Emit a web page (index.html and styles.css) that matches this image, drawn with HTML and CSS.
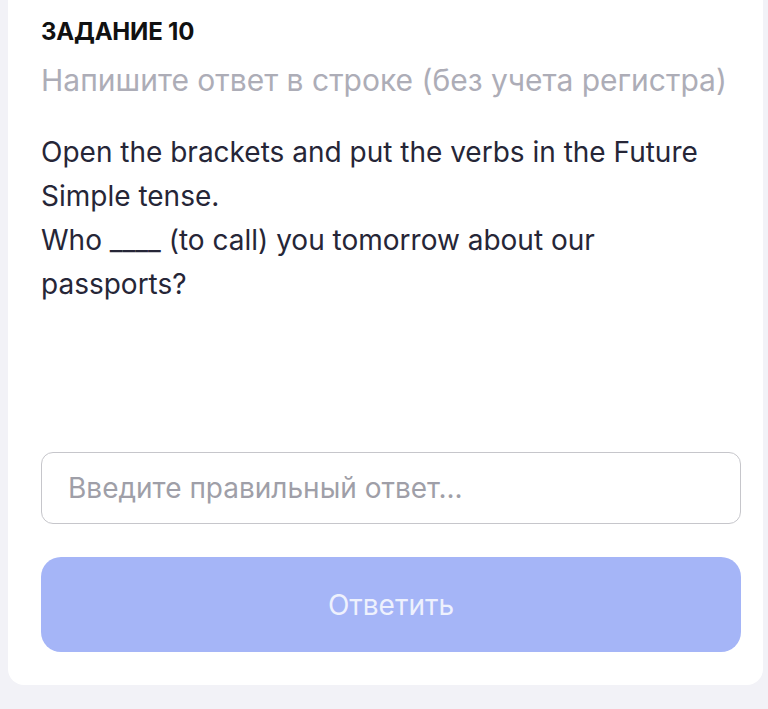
FILE: index.html
```html
<!DOCTYPE html>
<html lang="ru">
<head>
  <meta charset="UTF-8">
  <meta name="viewport" content="width=device-width, initial-scale=1.0">
  <title>Задание 10</title>
  <link rel="stylesheet" href="styles.css">
</head>
<body>
  <div class="task-card">
    <div class="task-header">
      <h2 class="task-title">ЗАДАНИЕ 10</h2>
      <div class="task-hint">Напишите ответ в строке (без учета регистра)</div>
    </div>

    <div class="task-text">
      <p>Open the brackets and put the verbs in the Future Simple tense.</p>
      <p>Who ____ (to call) you tomorrow about our passports?</p>
    </div>

    <form class="answer-form">
      <input type="text" class="answer-input" placeholder="Введите правильный ответ...">
      <button type="submit" class="answer-btn" disabled>Ответить</button>
    </form>
  </div>
</body>
</html>
```

FILE: styles.css
```css
body {
  margin: 0;
  background: #f2f2f7;
  font-family: Inter, "Noto Sans", sans-serif;
}

.task-card {
  margin: 0 5px 0 8px;
  padding: 17px 22px 33px 33px;
  background: #fff;
  border-radius: 0 0 16px 16px;
}

.task-title {
  margin: 0;
  font-size: 24px;
  font-weight: 700;
  letter-spacing: -0.2px;
  color: #111;
  line-height: 30px;
}

.task-hint {
  margin-top: 15px;
  font-size: 30px;
  line-height: 36px;
  color: #adadb7;
}

.task-text {
  margin-top: 32px;
  min-height: 322px;
  font-size: 28px;
  line-height: 44px;
  color: #262637;
}

.task-text p {
  margin: 0;
}

.answer-form {
  display: flex;
  flex-direction: column;
  gap: 33px;
}

.answer-input {
  height: 72px;
  padding: 0 26px;
  border: 1.5px solid #c6c6cb;
  border-radius: 12px;
  font-size: 28px;
  font-family: Inter, "Noto Sans", sans-serif;
  box-sizing: border-box;
  outline: none;
}

.answer-input::placeholder {
  color: #9f9fa8;
}

.answer-btn {
  height: 95px;
  border: none;
  border-radius: 20px;
  background: #a5b5f7;
  color: #eef1fd;
  font-size: 28px;
  font-family: Inter, "Noto Sans", sans-serif;
}
```
